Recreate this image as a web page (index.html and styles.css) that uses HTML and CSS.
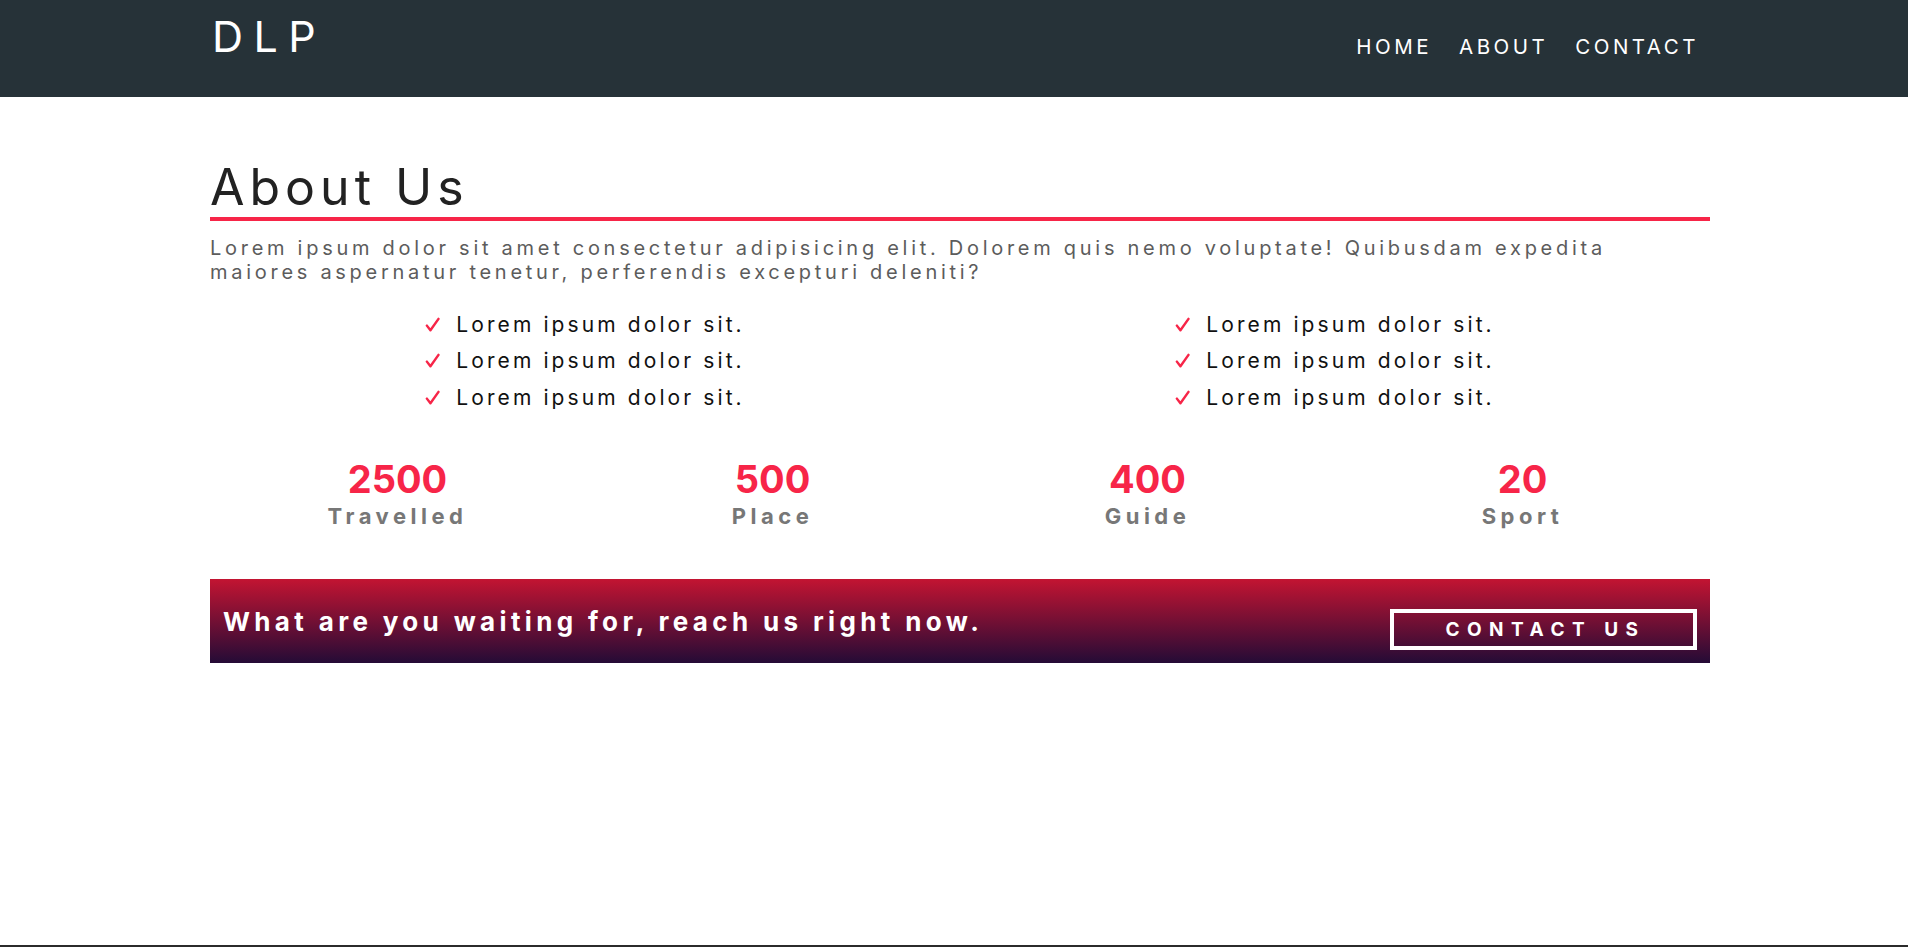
FILE: index.html
```html
<!DOCTYPE html>
<html lang="en">
<head>
<meta charset="utf-8">
<title>DLP - About</title>
<link rel="stylesheet" href="styles.css">
</head>
<body>
<div class="page">
  <header class="topbar">
    <div class="container bar">
      <div class="logo">DLP</div>
      <nav class="nav">
        <a href="#">HOME</a>
        <a href="#">ABOUT</a>
        <a href="#">CONTACT</a>
      </nav>
    </div>
  </header>

  <main class="container about">
    <h1 class="title">About Us</h1>
    <p class="intro">Lorem ipsum dolor sit amet consectetur adipisicing elit. Dolorem quis nemo voluptate! Quibusdam expedita maiores aspernatur tenetur, perferendis excepturi deleniti?</p>

    <div class="checks">
      <ul class="check-list">
        <li><svg class="tick" viewBox="0 0 16 16"><path d="M2 9.2 L5.8 14.2 L14.4 2" /></svg>Lorem ipsum dolor sit.</li>
        <li><svg class="tick" viewBox="0 0 16 16"><path d="M2 9.2 L5.8 14.2 L14.4 2" /></svg>Lorem ipsum dolor sit.</li>
        <li><svg class="tick" viewBox="0 0 16 16"><path d="M2 9.2 L5.8 14.2 L14.4 2" /></svg>Lorem ipsum dolor sit.</li>
      </ul>
      <ul class="check-list">
        <li><svg class="tick" viewBox="0 0 16 16"><path d="M2 9.2 L5.8 14.2 L14.4 2" /></svg>Lorem ipsum dolor sit.</li>
        <li><svg class="tick" viewBox="0 0 16 16"><path d="M2 9.2 L5.8 14.2 L14.4 2" /></svg>Lorem ipsum dolor sit.</li>
        <li><svg class="tick" viewBox="0 0 16 16"><path d="M2 9.2 L5.8 14.2 L14.4 2" /></svg>Lorem ipsum dolor sit.</li>
      </ul>
    </div>

    <div class="stats">
      <div class="stat"><div class="num">2500</div><div class="label">Travelled</div></div>
      <div class="stat"><div class="num">500</div><div class="label">Place</div></div>
      <div class="stat"><div class="num">400</div><div class="label">Guide</div></div>
      <div class="stat"><div class="num">20</div><div class="label">Sport</div></div>
    </div>

    <div class="cta">
      <h3 class="cta-text">What are you waiting for, reach us right now.</h3>
      <a class="cta-btn" href="#">CONTACT US</a>
    </div>
  </main>
</div>
<div class="hbar"></div>
</body>
</html>
```

FILE: styles.css
```css
* { box-sizing: border-box; }

html, body {
  margin: 0;
  padding: 0;
  overflow-x: hidden;
  background: #ffffff;
}

body {
  font-family: Inter, "Noto Sans", sans-serif;
  color: #222;
}

.page {
  width: 1920px;
  min-height: 947px;
}

.container {
  width: 1500px;
  margin: 0 auto;
}

/* header */
.topbar {
  background: #263238;
  height: 97px;
}

.bar {
  display: flex;
  justify-content: space-between;
  align-items: flex-start;
  height: 97px;
}

.logo {
  color: #fff;
  font-size: 43px;
  font-weight: 400;
  letter-spacing: 10.5px;
  line-height: 1;
  padding: 15px 0 0 2px;
}

.nav {
  display: flex;
  gap: 27px;
  padding: 35px 11px 0 0;
}

.nav a {
  color: #fff;
  text-decoration: none;
  font-size: 20.5px;
  letter-spacing: 3.5px;
  line-height: 24px;
}

/* about */
.title {
  margin: 0;
  padding-top: 62px;
  font-size: 50px;
  font-weight: 400;
  letter-spacing: 5px;
  line-height: 56px;
  color: #222;
  border-bottom: 4px solid #f72548;
  padding-bottom: 2px;
}

.intro {
  margin: 15px 0 0;
  max-width: 1470px;
  font-size: 20px;
  line-height: 24px;
  letter-spacing: 3.72px;
  color: #5c5c5c;
}

.checks {
  display: grid;
  grid-template-columns: 1fr 1fr;
  margin-top: 22px;
}

.check-list {
  list-style: none;
  margin: 0;
  padding: 0;
  justify-self: center;
}

.check-list li {
  display: flex;
  align-items: center;
  height: 36.5px;
  font-size: 21px;
  letter-spacing: 3.1px;
  color: #111;
}

.tick {
  width: 15px;
  height: 15px;
  margin-right: 16px;
  fill: none;
  stroke: #f72548;
  stroke-width: 2.6;
  stroke-linecap: round;
  stroke-linejoin: round;
}

.stats {
  display: grid;
  grid-template-columns: repeat(4, 1fr);
  margin-top: 41px;
  text-align: center;
}

.num {
  font-size: 38px;
  font-weight: 700;
  color: #f72548;
  line-height: 44px;
}

.label {
  font-size: 22px;
  font-weight: 700;
  color: #777;
  letter-spacing: 4.5px;
  line-height: 30px;
}

.cta {
  margin-top: 48px;
  height: 84px;
  background: linear-gradient(to bottom, #c31432, #240b36);
  display: flex;
  justify-content: space-between;
  align-items: flex-start;
  padding: 0 13px 0 13px;
}

.cta-text {
  margin: 0;
  padding-top: 27px;
  color: #fff;
  font-size: 26px;
  font-weight: 700;
  letter-spacing: 4.35px;
  line-height: 32px;
}

.cta-btn {
  margin-top: 30px;
  width: 307px;
  height: 41px;
  border: 4px solid #fff;
  color: #fff;
  text-decoration: none;
  font-size: 19px;
  font-weight: 700;
  letter-spacing: 7.5px;
  padding-left: 4px;
  display: flex;
  align-items: center;
  justify-content: center;
}

.hbar {
  position: fixed;
  left: 0;
  right: 0;
  bottom: 0;
  height: 2px;
  background: #2b2b2b;
}
```
